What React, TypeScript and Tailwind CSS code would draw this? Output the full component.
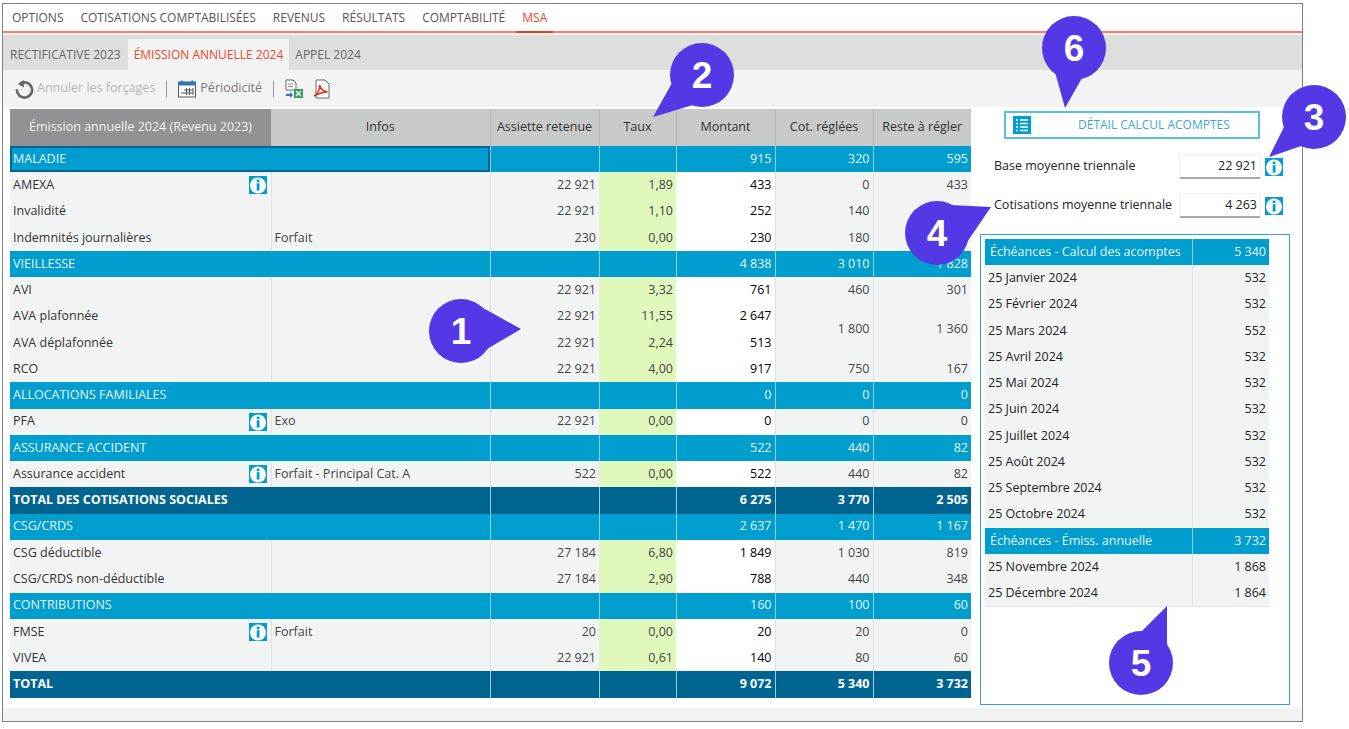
import { RefreshCcw } from "lucide-react";

type Row = {
  kind: "head" | "line" | "total";
  label: string;
  info?: boolean;
  infos?: string;
  base?: string;
  rate?: string;
  amount?: string;
  paid?: string;
  rest?: string;
};

const rows: Row[] = [
  { kind: "head", label: "MALADIE", amount: "915", paid: "320", rest: "595" },
  { kind: "line", label: "AMEXA", info: true, base: "22 921", rate: "1,89", amount: "433", paid: "0", rest: "433" },
  { kind: "line", label: "Invalidité", base: "22 921", rate: "1,10", amount: "252", paid: "140", rest: "112" },
  { kind: "line", label: "Indemnités journalières", infos: "Forfait", base: "230", rate: "0,00", amount: "230", paid: "180", rest: "50" },
  { kind: "head", label: "VIEILLESSE", amount: "4 838", paid: "3 010", rest: "1 828" },
  { kind: "line", label: "AVI", base: "22 921", rate: "3,32", amount: "761", paid: "460", rest: "301" },
  { kind: "line", label: "AVA plafonnée", base: "22 921", rate: "11,55", amount: "2 647", paid: "1 800", rest: "1 360" },
  { kind: "line", label: "AVA déplafonnée", base: "22 921", rate: "2,24", amount: "513" },
  { kind: "line", label: "RCO", base: "22 921", rate: "4,00", amount: "917", paid: "750", rest: "167" },
  { kind: "head", label: "ALLOCATIONS FAMILIALES", amount: "0", paid: "0", rest: "0" },
  { kind: "line", label: "PFA", info: true, infos: "Exo", base: "22 921", rate: "0,00", amount: "0", paid: "0", rest: "0" },
  { kind: "head", label: "ASSURANCE ACCIDENT", amount: "522", paid: "440", rest: "82" },
  { kind: "line", label: "Assurance accident", info: true, infos: "Forfait - Principal Cat. A", base: "522", rate: "0,00", amount: "522", paid: "440", rest: "82" },
  { kind: "total", label: "TOTAL DES COTISATIONS SOCIALES", amount: "6 275", paid: "3 770", rest: "2 505" },
  { kind: "head", label: "CSG/CRDS", amount: "2 637", paid: "1 470", rest: "1 167" },
  { kind: "line", label: "CSG déductible", base: "27 184", rate: "6,80", amount: "1 849", paid: "1 030", rest: "819" },
  { kind: "line", label: "CSG/CRDS non-déductible", base: "27 184", rate: "2,90", amount: "788", paid: "440", rest: "348" },
  { kind: "head", label: "CONTRIBUTIONS", amount: "160", paid: "100", rest: "60" },
  { kind: "line", label: "FMSE", info: true, infos: "Forfait", base: "20", rate: "0,00", amount: "20", paid: "20", rest: "0" },
  { kind: "line", label: "VIVEA", base: "22 921", rate: "0,61", amount: "140", paid: "80", rest: "60" },
  { kind: "total", label: "TOTAL", amount: "9 072", paid: "5 340", rest: "3 732" },
];

const schedule = [
  { label: "Échéances - Calcul des acomptes", value: "5 340", head: true },
  { label: "25 Janvier 2024", value: "532" },
  { label: "25 Février 2024", value: "532" },
  { label: "25 Mars 2024", value: "552" },
  { label: "25 Avril 2024", value: "532" },
  { label: "25 Mai 2024", value: "532" },
  { label: "25 Juin 2024", value: "532" },
  { label: "25 Juillet 2024", value: "532" },
  { label: "25 Août 2024", value: "532" },
  { label: "25 Septembre 2024", value: "532" },
  { label: "25 Octobre 2024", value: "532" },
  { label: "Échéances - Émiss. annuelle", value: "3 732", head: true },
  { label: "25 Novembre 2024", value: "1 868" },
  { label: "25 Décembre 2024", value: "1 864" },
];

const bubbles = [
  { n: "1", cx: 461, cy: 331, tail: "485,309 521,329 487,349" },
  { n: "2", cx: 702, cy: 75, tail: "672,83 653,117 693,105" },
  { n: "3", cx: 1314, cy: 117, tail: "1285,125 1269,157 1304,145" },
  { n: "4", cx: 937, cy: 233, tail: "950,205 991,207 965,245" },
  { n: "5", cx: 1141, cy: 663, tail: "1142,631 1167,606 1167,645" },
  { n: "6", cx: 1074, cy: 48, tail: "1055,72 1065,108 1082,78" },
];

function InfoIcon() {
  return (
    <svg width="18" height="18" viewBox="0 0 18 18" className="block shrink-0">
      <rect width="18" height="18" fill="#009dcf" />
      <circle cx="9" cy="9.5" r="8" fill="#fff" />
      <rect x="7.7" y="3.6" width="2.8" height="2.6" fill="#009dcf" />
      <rect x="7.7" y="7.2" width="2.8" height="7.4" fill="#009dcf" />
    </svg>
  );
}

function Cell({ children, className = "" }: { children?: React.ReactNode; className?: string }) {
  return <td className={`h-[26.28px] p-0 px-[3px] ${className}`}>{children}</td>;
}

function DataRow({ row }: { row: Row }) {
  if (row.kind !== "line") {
    const bg = row.kind === "head" ? "bg-[#009dcf]" : "bg-[#006490] font-bold";
    const sep = row.kind === "head" ? "border-l border-[#8fcfe6]" : "border-l border-[#8fb6c8]";
    const focus = row.label === "MALADIE" ? "outline-2 -outline-offset-2 outline-[#006490]" : "";
    return (
      <tr className={`${bg} text-[#e6f6fb] ${row.kind === "total" ? "text-white" : ""}`}>
        <Cell className={focus}>{row.label}</Cell>
        <Cell className="hidden" />
        <Cell className={sep} />
        <Cell className={sep} />
        <Cell className={`${sep} text-right`}>{row.amount}</Cell>
        <Cell className={`${sep} text-right`}>{row.paid}</Cell>
        <Cell className={`${sep} text-right`}>{row.rest}</Cell>
      </tr>
    );
  }
  const sep = "border-l border-[#dfe2e2]";
  const merged = row.label === "AVA plafonnée";
  const skip = row.label === "AVA déplafonnée";
  return (
    <tr className="bg-[#f2f4f4] text-[#333]">
      <Cell>
        <div className="flex items-center justify-between pr-px">
          <span>{row.label}</span>
          {row.info && <InfoIcon />}
        </div>
      </Cell>
      <Cell className={`${sep} text-[#444]`}>{row.infos}</Cell>
      <Cell className={`${sep} text-right text-[#444]`}>{row.base}</Cell>
      <Cell className="bg-[#e0f8bc] text-right text-[#444]">{row.rate}</Cell>
      <Cell className="bg-white text-right text-black">{row.amount}</Cell>
      {!skip && (
        <td rowSpan={merged ? 2 : 1} className={`${sep} p-0 px-[3px] text-right text-[#444]`}>
          {row.paid}
        </td>
      )}
      {!skip && (
        <td rowSpan={merged ? 2 : 1} className={`${sep} p-0 px-[3px] text-right text-[#444]`}>
          {row.rest}
        </td>
      )}
    </tr>
  );
}

export default function App() {
  return (
    <div className="relative h-[729px] w-[1349px] overflow-hidden bg-white text-[12.5px] [font-family:'Open_Sans',sans-serif]">
      <div className="ml-[2px] mt-[3px] flex h-[719px] w-[1301px] flex-col border border-[#808080] bg-[#f2f4f4]">
        <nav className="flex h-[29px] items-stretch border-b-2 border-[#f0836a] bg-white pl-[3px] text-[12px] text-[#555]">
          {["OPTIONS", "COTISATIONS COMPTABILISÉES", "REVENUS", "RÉSULTATS", "COMPTABILITÉ"].map((t) => (
            <span key={t} className="mr-[5px] flex items-center px-[6px]">
              {t}
            </span>
          ))}
          <span className="-mb-[2px] flex items-center border-b-2 border-[#f03c1e] px-[6px] text-[#f0452a]">MSA</span>
        </nav>
        <div className="mt-[2px] flex h-[35px] items-end bg-[#dededc] pl-[5px] text-[12px] text-[#666]">
          <span className="flex h-[31px] items-center pr-[7px] pl-[2px]">RECTIFICATIVE 2023</span>
          <span className="flex h-[31px] items-center bg-[#f2f4f4] px-[6px] text-[#f0452a]">ÉMISSION ANNUELLE 2024</span>
          <span className="flex h-[31px] items-center px-[6px]">APPEL 2024</span>
        </div>
        <div className="flex h-[37px] items-center pl-[11px]">
          <RefreshCcw size={0} className="hidden" />
          <svg width="20" height="20" viewBox="0 0 20 20" fill="none" className="mr-[3px]">
            <path d="M5.5 5.2a7.6 7.6 0 1 1-2.6 5" stroke="#666" strokeWidth="2.6" />
            <path d="M9.8 1v7.4L4 5z" fill="#666" />
          </svg>
          <span className="text-[#b4b6b6]">Annuler les forçages</span>
          <span className="mx-[11px] h-[16px] w-px bg-[#9a9a9a]" />
          <svg width="18" height="18" viewBox="0 0 18 18" fill="none">
            <rect x="0.5" y="2" width="17" height="15" fill="#fff" stroke="#555" />
            <rect x="0.5" y="2" width="17" height="3.5" fill="#2f78b8" />
            <rect x="3" y="0.5" width="1.6" height="3" fill="#2f78b8" />
            <rect x="13.4" y="0.5" width="1.6" height="3" fill="#2f78b8" />
            <path d="M6 10h9M6 13h9M8.5 8v7M11.5 8v7M15 8v7M3 13h3" stroke="#555" />
          </svg>
          <span className="ml-[4px] text-[#777]">Périodicité</span>
          <span className="mx-[11px] h-[16px] w-px bg-[#9a9a9a]" />
          <svg width="19" height="20" viewBox="0 0 19 20" fill="none">
            <path d="M1 1h7l3 3v7H1z" fill="#fff" stroke="#666" />
            <path d="M3 5h5M3 7.5h5" stroke="#888" />
            <path d="M1 15h4v-2l3 3-3 3v-2H1z" fill="#2f78b8" />
            <rect x="9" y="10" width="9" height="9" fill="#2e9e5b" />
            <path d="M11 12l5 5M16 12l-5 5" stroke="#fff" strokeWidth="1.4" />
          </svg>
          <svg width="18" height="20" viewBox="0 0 18 20" fill="none" className="ml-[9px]">
            <path d="M3 1h9l4 4v14H3z" fill="#fff" stroke="#666" />
            <path d="M1 17c4-2 6-7 5.5-11 1 4 3 6 8 7-4 0-8 1-13.5 4z" stroke="#e0301e" strokeWidth="1.6" />
          </svg>
        </div>
        <div className="flex h-[601px] bg-white pl-[7px] pt-[2px]">
          <table className="h-fit w-[961px] table-fixed border-collapse text-[12.5px]">
            <colgroup>
              <col className="w-[261px]" />
              <col className="w-[219px]" />
              <col className="w-[109px]" />
              <col className="w-[77px]" />
              <col className="w-[99px]" />
              <col className="w-[98px]" />
              <col className="w-[98px]" />
            </colgroup>
            <thead>
              <tr className="h-[37px] bg-[#c8caca] font-normal text-[#333]">
                <th className="bg-[#929296] font-normal text-[#f2f2f2]">Émission annuelle 2024 (Revenu 2023)</th>
                <th className="font-normal">Infos</th>
                <th className="border-l border-[#b4b6b6] font-normal">Assiette retenue</th>
                <th className="border-l border-[#b4b6b6] font-normal">Taux</th>
                <th className="border-l border-[#b4b6b6] font-normal">Montant</th>
                <th className="border-l border-[#b4b6b6] font-normal">Cot. réglées</th>
                <th className="border-l border-[#b4b6b6] font-normal">Reste à régler</th>
              </tr>
            </thead>
            <tbody>
              {rows.map((r) =>
                r.kind === "line" ? (
                  <DataRow key={r.label} row={r} />
                ) : (
                  <tr
                    key={r.label}
                    className={r.kind === "head" ? "bg-[#009dcf] text-[#e6f6fb]" : "bg-[#006490] font-bold text-white"}
                  >
                    <td
                      colSpan={2}
                      className={`h-[26.28px] p-0 px-[3px] ${
                        r.label === "MALADIE" ? "outline-2 -outline-offset-2 outline-[#006490]" : ""
                      }`}
                    >
                      {r.label}
                    </td>
                    <td className="border-l border-[#8fcfe6] p-0" />
                    <td className="border-l border-[#8fcfe6] p-0" />
                    <td className="border-l border-[#8fcfe6] p-0 px-[3px] text-right">{r.amount}</td>
                    <td className="border-l border-[#8fcfe6] p-0 px-[3px] text-right">{r.paid}</td>
                    <td className="border-l border-[#8fcfe6] p-0 px-[3px] text-right">{r.rest}</td>
                  </tr>
                )
              )}
            </tbody>
          </table>
          <aside className="ml-[9px] flex w-[310px] flex-col">
            <button className="ml-[24px] mt-[2px] flex h-[28px] w-[256px] items-center border-2 border-[#5bbfe0] text-[12px] text-[#3ea9d6]">
              <svg width="18" height="18" viewBox="0 0 18 18" className="ml-[7px]">
                <rect width="18" height="18" fill="#009dcf" />
                <path d="M3 4h2M7 4h8M3 7.5h2M7 7.5h8M3 11h2M7 11h8M3 14.500h2M7 14.500h8" stroke="#fff" strokeWidth="1.6" />
              </svg>
              <span className="ml-[47px]">DÉTAIL CALCUL ACOMPTES</span>
            </button>
            <div className="mt-[15px] flex h-[25px] items-center pl-[14px]">
              <span className="w-[185px] text-[#222]">Base moyenne triennale</span>
              <span className="flex h-[25px] w-[82px] items-center justify-end rounded-[2px] border border-[#eee] border-b-2 border-b-[#aaa] pr-[3px] text-[#222]">
                22 921
              </span>
              <span className="ml-[4px]"><InfoIcon /></span>
            </div>
            <div className="mt-[14px] flex h-[25px] items-center pl-[14px]">
              <span className="w-[185px] text-[#222]">Cotisations moyenne triennale</span>
              <span className="flex h-[25px] w-[82px] items-center justify-end rounded-[2px] border border-[#eee] border-b-2 border-b-[#aaa] pr-[3px] text-[#222]">
                4 263
              </span>
              <span className="ml-[4px]"><InfoIcon /></span>
            </div>
            <div className="mt-[16px] h-[471px] w-[310px] border border-[#2ea3cf] p-[4px]">
              <table className="w-[284px] table-fixed border-collapse border-b border-[#e4e6e6]">
                <colgroup>
                  <col className="w-[207px]" />
                  <col className="w-[77px]" />
                </colgroup>
                <tbody>
                  {schedule.map((s) => (
                    <tr key={s.label} className={s.head ? "bg-[#009dcf] text-[#e6f6fb]" : "bg-[#f2f4f4] text-[#222]"}>
                      <td className={`h-[26.28px] p-0 ${s.head ? "pl-[5px]" : "pl-[3px]"}`}>{s.label}</td>
                      <td className={`border-l p-0 pr-[3px] text-right ${s.head ? "border-[#8fcfe6]" : "border-[#dfe2e2]"}`}>
                        {s.value}
                      </td>
                    </tr>
                  ))}
                </tbody>
              </table>
            </div>
          </aside>
        </div>
      </div>
      <svg width="1349" height="729" className="pointer-events-none absolute top-0 left-0">
        {bubbles.map((b) => (
          <g key={b.n} fill="#5239e5">
            <circle cx={b.cx} cy={b.cy} r="32" />
            <polygon points={b.tail} />
            <text
              x={b.cx}
              y={b.cy + 13}
              textAnchor="middle"
              fill="#fff"
              fontSize="37"
              fontWeight="700"
              fontFamily="'Liberation Sans', sans-serif"
            >
              {b.n}
            </text>
          </g>
        ))}
      </svg>
    </div>
  );
}
